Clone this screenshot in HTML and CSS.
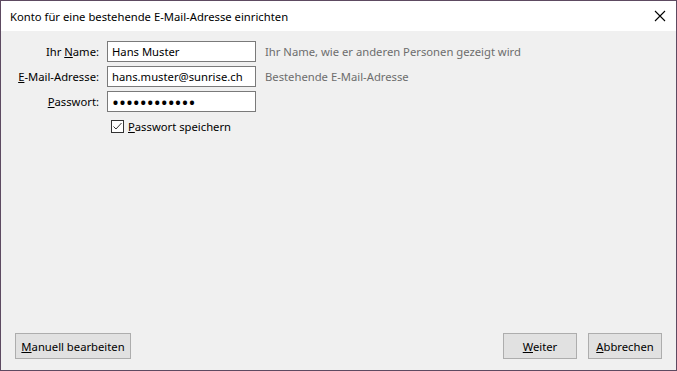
FILE: index.html
```html
<!DOCTYPE html>
<html lang="de">
<head>
  <meta charset="UTF-8">
  <title>Konto einrichten</title>
  <link rel="stylesheet" href="styles.css">
</head>
<body>
<div class="dialog">
  <div class="titlebar">
    <span class="title">Konto für eine bestehende E-Mail-Adresse einrichten</span>
    <svg class="close" width="12" height="12" viewBox="0 0 12 12">
      <path d="M1 1 L11 11 M11 1 L1 11" stroke="#000" stroke-width="1.1" fill="none"/>
    </svg>
  </div>
  <div class="content">
    <div class="form">
      <label class="label">Ihr <u>N</u>ame:</label>
      <input class="field" type="text" value="Hans Muster">
      <span class="hint">Ihr Name, wie er anderen Personen gezeigt wird</span>

      <label class="label"><u>E</u>-Mail-Adresse:</label>
      <input class="field" type="text" value="hans.muster@sunrise.ch">
      <span class="hint">Bestehende E-Mail-Adresse</span>

      <label class="label"><u>P</u>asswort:</label>
      <input class="field password" type="password" value="abcdefghijkl">
      <span></span>

      <span></span>
      <div class="check-row">
        <span class="checkbox">
          <svg width="11" height="11" viewBox="0 0 11 11">
            <path d="M1.5 5.5 L4 8 L9.5 2" stroke="#333" stroke-width="1" fill="none"/>
          </svg>
        </span>
        <span><u>P</u>asswort speichern</span>
      </div>
      <span></span>
    </div>
    <div class="footer">
      <button class="btn btn-wide"><u>M</u>anuell bearbeiten</button>
      <div class="spacer"></div>
      <button class="btn"><u>W</u>eiter</button>
      <button class="btn"><u>A</u>bbrechen</button>
    </div>
  </div>
</div>
</body>
</html>
```
FILE: styles.css
```css
html, body {
  margin: 0;
  padding: 0;
  width: 677px;
  height: 371px;
  overflow: hidden;
}
body {
  font-family: "Noto Sans", "Open Sans", sans-serif;
  font-size: 11.25px;
  color: #000;
}
.dialog {
  box-sizing: border-box;
  width: 677px;
  height: 371px;
  border: 1px solid #5d4a61;
  display: flex;
  flex-direction: column;
  background: #f0f0f0;
}
.titlebar {
  height: 30px;
  background: #fff;
  display: flex;
  align-items: center;
  padding: 0 10px 0 9px;
}
.title {
  flex: 1;
  color: #000;
}
.content {
  flex: 1;
  display: flex;
  flex-direction: column;
}
.form {
  display: grid;
  grid-template-columns: 98px 149px auto;
  column-gap: 8px;
  row-gap: 4px;
  padding: 10px 0 0 0;
  grid-auto-rows: 21px;
}
.label {
  text-align: right;
  align-self: center;
}
.field {
  box-sizing: border-box;
  height: 21px;
  width: 149px;
  margin: 0;
  border: 1px solid #7a7a7a;
  background: #fff;
  padding: 0 4px;
  font-family: inherit;
  font-size: 11.25px;
  color: #000;
  outline: none;
}
.password {
  font-size: 18.5px;
  letter-spacing: 0;
}
.hint {
  align-self: center;
  color: #6d6d6d;
  padding-left: 1px;
}
.check-row {
  display: flex;
  align-items: center;
  gap: 4px;
  padding: 0 0 0 4px;
  grid-column: 2 / 4;
}
.checkbox {
  box-sizing: border-box;
  width: 13px;
  height: 13px;
  border: 1px solid #333;
  background: #fff;
  display: flex;
}
.footer {
  margin-top: auto;
  display: flex;
  padding: 0 14px 11px 14px;
  gap: 11px;
}
.spacer {
  flex: 1;
}
.btn {
  box-sizing: border-box;
  height: 26px;
  width: 74px;
  border: 1px solid #adadad;
  background: #e1e1e1;
  font-family: inherit;
  font-size: 11.25px;
  color: #000;
  padding: 0;
}
.btn-wide {
  width: 116px;
}
```
